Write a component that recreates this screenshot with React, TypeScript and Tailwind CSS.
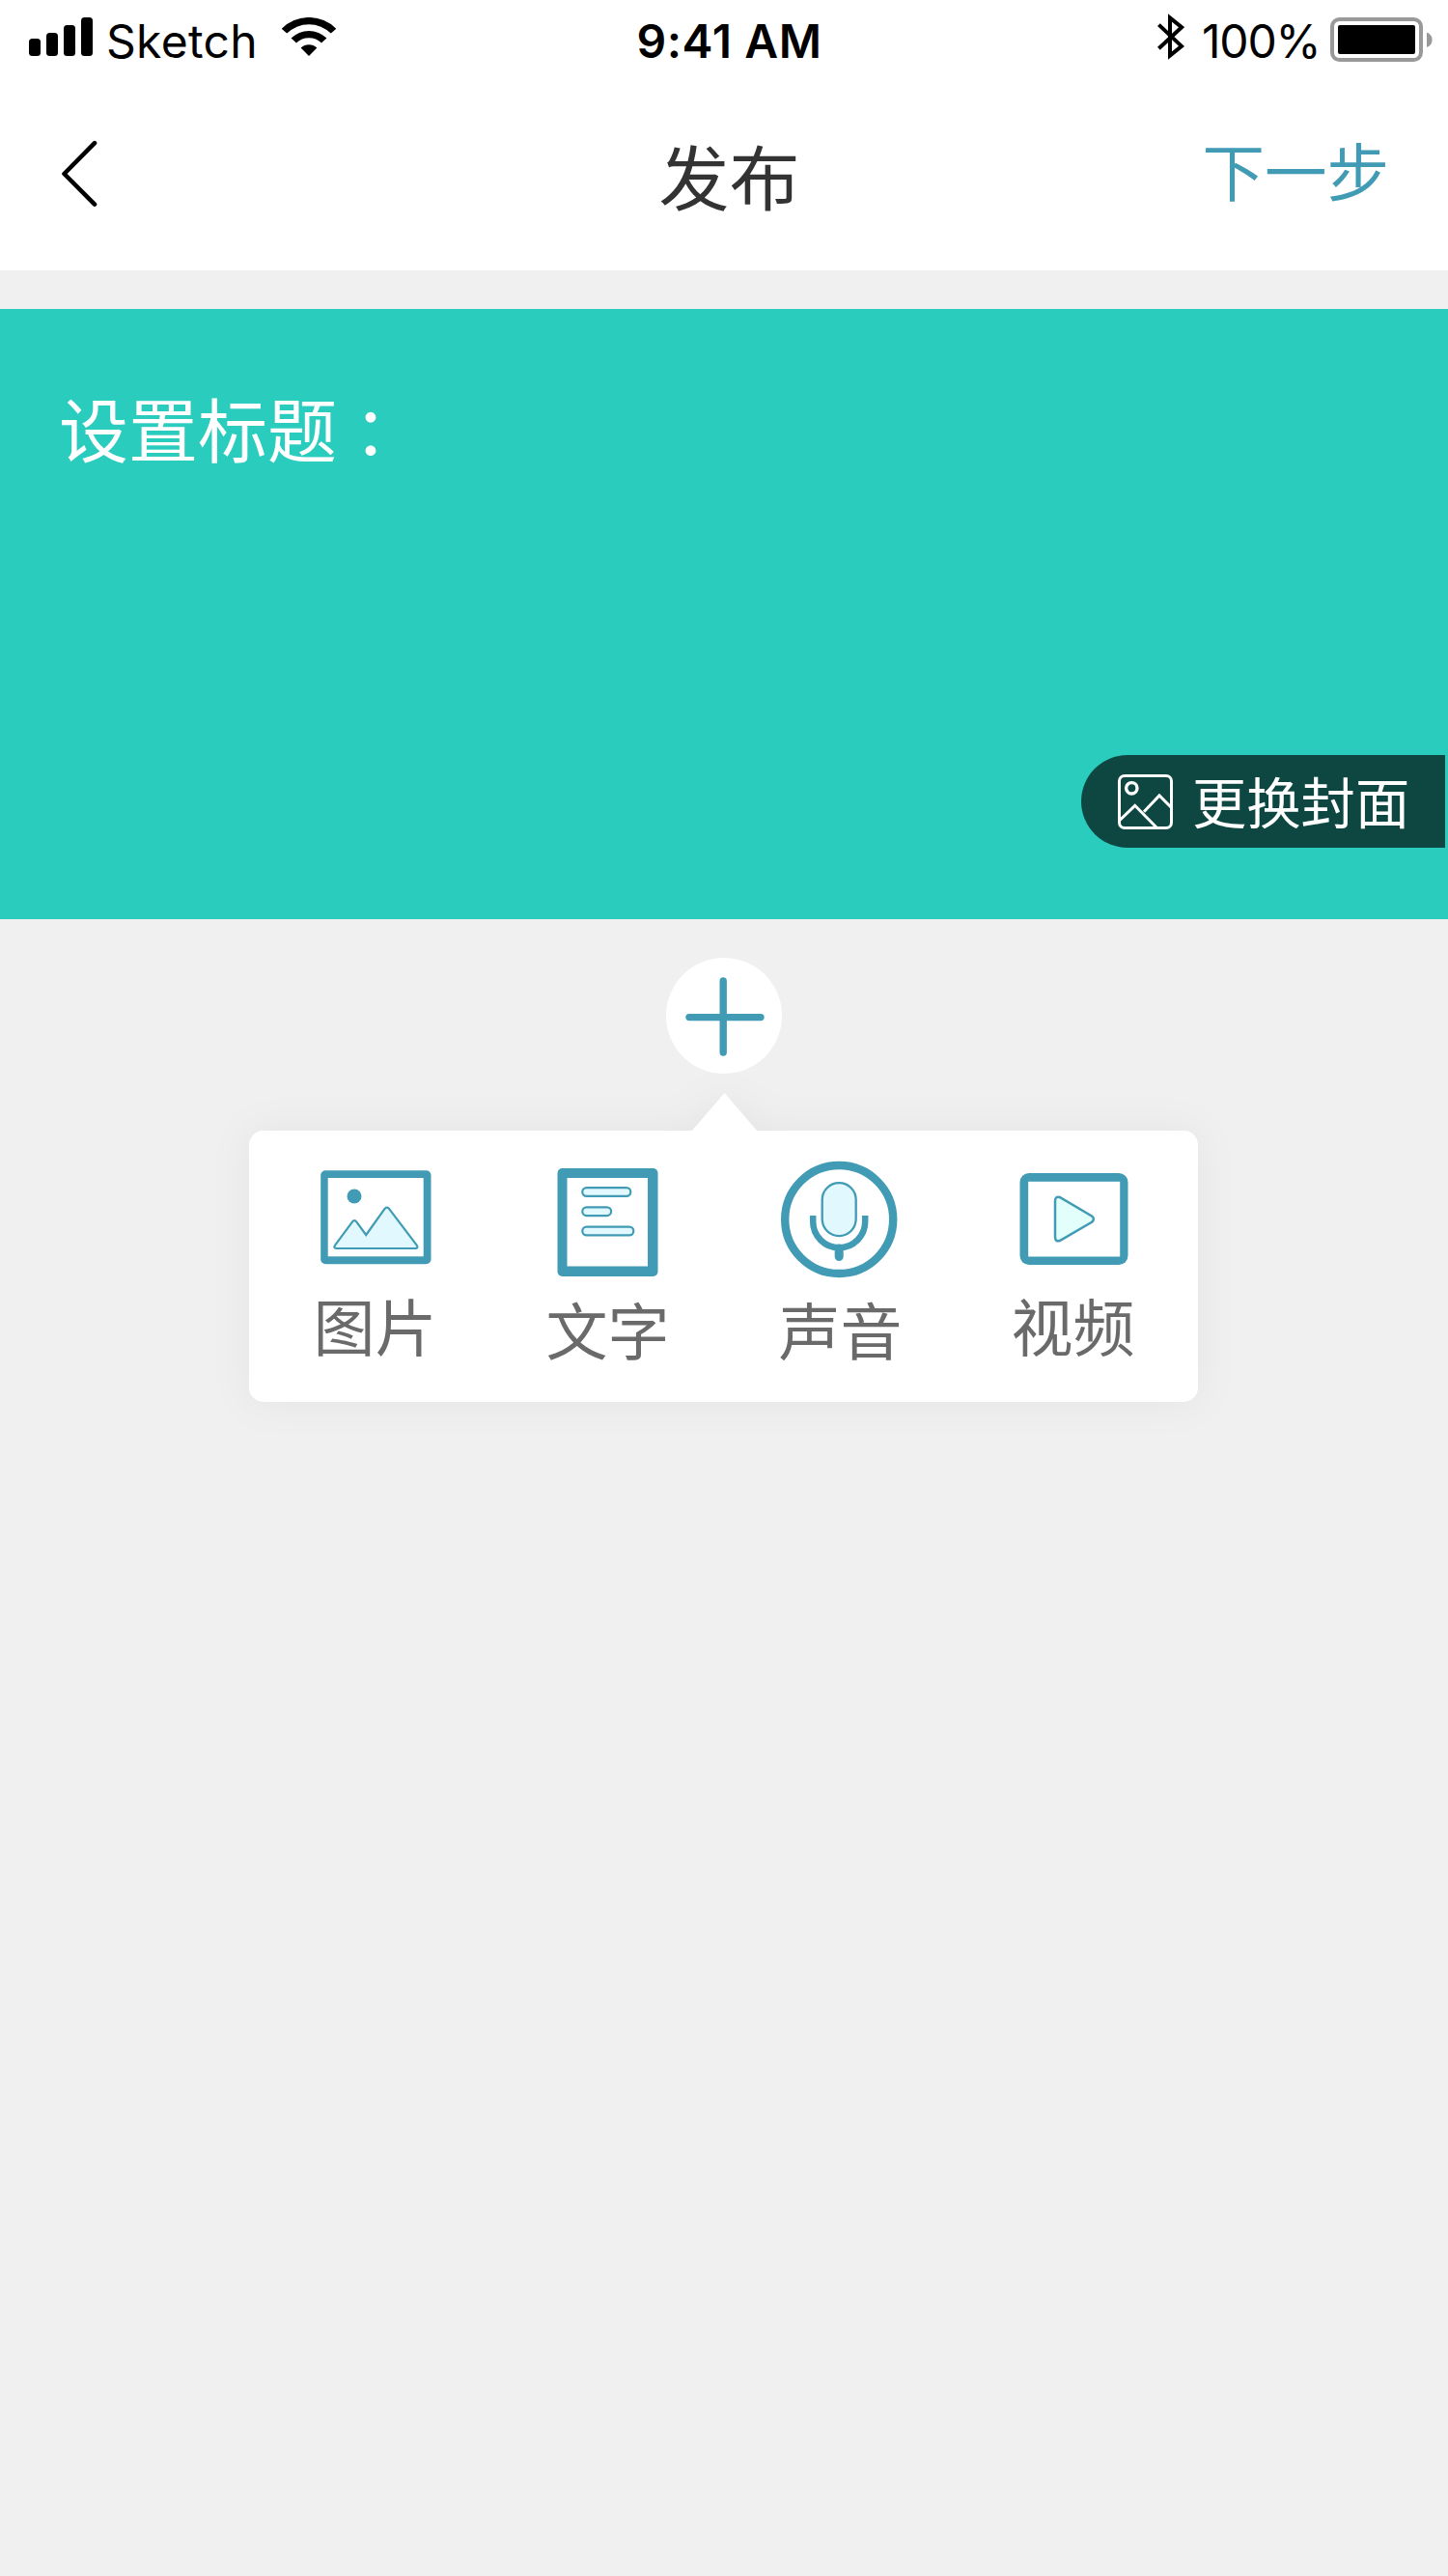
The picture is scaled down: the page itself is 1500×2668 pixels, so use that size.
import type { ReactNode } from "react";

const BLUE = "#419bb4";
const PALE = "#e0f8fe";

function Signal() {
  return (
    <svg className="mt-[18px] block h-10 w-[66px] shrink-0" viewBox="0 0 66 40">
      <rect x="0" y="22" width="12" height="18" rx="3.5" />
      <rect x="18" y="16" width="12" height="24" rx="3.5" />
      <rect x="36" y="8" width="12" height="32" rx="3.5" />
      <rect x="54" y="0" width="12" height="40" rx="3.5" />
    </svg>
  );
}

function Wifi() {
  return (
    <svg className="mt-[18px] block h-10 w-14 shrink-0" viewBox="0 0 56 40">
      <path d="M-.3 11.7A40 40 0 0 1 56.3 11.7L50.8 16.6A32.3 32.3 0 0 0 5.2 16.6Z" />
      <path d="M9.6 21.6A26 26 0 0 1 46.4 21.6L41 26.6A18.2 18.2 0 0 0 15 26.6Z" />
      <path d="M19.6 31.6A12 12 0 0 1 36.4 31.6L28 40Z" />
    </svg>
  );
}

function Bluetooth() {
  return (
    <svg className="mt-[14px] block h-12 w-7 shrink-0" viewBox="0 0 28 48" fill="none" stroke="#000" strokeWidth="4">
      <path d="M1.4 11.6L25 33.8L13 43.6V4.4L25 14.2L1.4 36.2" strokeMiterlimit="10" />
    </svg>
  );
}

function Battery() {
  return (
    <svg className="mt-[18px] block h-[46px] w-[106px] shrink-0" viewBox="0 0 106 46">
      <rect x="2" y="2" width="92" height="42" rx="7.5" fill="none" stroke="#999" strokeWidth="4" />
      <rect x="8" y="8" width="80" height="30" rx="2" />
      <path d="M100 15.5A8.2 8.2 0 0 1 100 31Z" fill="#999" />
    </svg>
  );
}

function CoverIcon() {
  return (
    <svg className="block h-[57px] w-[57px] shrink-0" viewBox="0 0 57 57" fill="none" stroke="#fff" strokeWidth="3">
      <rect x="1.5" y="1.5" width="54" height="54" rx="5.5" />
      <circle cx="14.3" cy="14.3" r="5.7" strokeWidth="3.4" />
      <path d="M2 47.5L17.7 32.3L40 55M27 38.8L43 22L55.5 34.5" />
    </svg>
  );
}

function ActionIcon({ children }: { children: ReactNode }) {
  return (
    <svg className="block h-[120px] w-[120px] overflow-visible" viewBox="0 0 120 120" fill="none">
      {children}
    </svg>
  );
}

const actions = [
  {
    label: "图片",
    offset: "mt-[8px]",
    icon: (
      <>
        <rect x="3.2" y="9.2" width="114.3" height="97" rx="5" fill={BLUE} />
        <rect x="10.7" y="17" width="99" height="81.3" fill="#fff" />
        <circle cx="38" cy="36" r="7.5" fill={BLUE} />
        <path
          d="M19.5 90Q15.8 89.6 18.3 86.3L35.7 62.8Q38.2 59.6 40.6 62.8L50.2 76L69.2 49.3Q71.8 45.8 74.4 49.3L102.5 86.3Q104.8 89.6 101.5 90Z"
          fill={PALE}
          stroke={BLUE}
          strokeWidth="2.2"
        />
      </>
    ),
  },
  {
    label: "文字",
    offset: "mt-[12px]",
    icon: (
      <>
        <rect x="7.5" y="7" width="104" height="112" rx="5" fill={BLUE} />
        <rect x="17.5" y="17" width="83.5" height="91.5" fill="#fff" />
        <g fill={PALE} stroke={BLUE} strokeWidth="2.2">
          <rect x="33.3" y="27.1" width="50" height="8.8" rx="4.4" />
          <rect x="33.3" y="47.3" width="29.8" height="8.8" rx="4.4" />
          <rect x="33.3" y="67.6" width="53" height="8.8" rx="4.4" />
        </g>
      </>
    ),
  },
  {
    label: "声音",
    offset: "mt-[12px]",
    icon: (
      <>
        <circle cx="58.2" cy="60" r="56" stroke={BLUE} strokeWidth="8.4" />
        <rect x="40.7" y="22.1" width="35" height="55" rx="17.5" fill={PALE} stroke={BLUE} strokeWidth="2.3" />
        <path d="M31.2 56V62.3A27 27 0 0 0 85.2 62.3V56" stroke={BLUE} strokeWidth="6.5" />
        <path d="M58.2 90V98.5" stroke={BLUE} strokeWidth="9" strokeLinecap="round" />
      </>
    ),
  },
  {
    label: "视频",
    offset: "mt-[8px]",
    icon: (
      <>
        <rect x="4.5" y="12" width="112" height="95" rx="9.5" fill={BLUE} />
        <rect x="13.2" y="20.8" width="95" height="77.7" fill="#fff" />
        <path
          d="M41 40.5Q41.2 35.7 45.8 37L79 56.5Q82.8 59.5 79 62.8L45.8 82Q41.2 83.5 41 78.5Z"
          fill="#e2fffb"
          stroke={BLUE}
          strokeWidth="2.5"
        />
      </>
    ),
  },
];

export default function App() {
  return (
    <div className="h-[2668px] w-[1500px] overflow-hidden bg-[#f0f0f0] font-['Noto_Sans_CJK_SC',sans-serif]">
      <header className="h-[280px] bg-white">
        <div className="grid h-20 grid-cols-[500px_500px_500px] font-['Inter',sans-serif] text-[48px] leading-[48px] text-black">
          <div className="flex items-start pl-[30px]">
            <Signal />
            <span className="mt-[19px] ml-[14px] w-[156px] tracking-[0.3px] whitespace-nowrap">Sketch</span>
            <span className="ml-[26px]">
              <Wifi />
            </span>
          </div>
          <div className="mt-[19px] pl-[11px] text-center font-semibold tracking-[0.6px] whitespace-nowrap">9:41 AM</div>
          <div className="flex items-start justify-end pr-4">
            <Bluetooth />
            <span className="mt-[19px] mr-[12px] ml-[18px] w-[121px] tracking-[-1.2px] whitespace-nowrap">100%</span>
            <Battery />
          </div>
        </div>
        <nav className="grid h-[200px] grid-cols-[500px_500px_500px]">
          <button className="flex items-start pt-[65px] pl-[63px]" aria-label="返回">
            <svg className="block h-[70px] w-10" viewBox="0 0 40 70" fill="none" stroke="#000" strokeWidth="4.6" strokeLinecap="round" strokeLinejoin="round">
              <path d="M35 3.2L3.5 35L35 66.7" />
            </svg>
          </button>
          <h1 className="pt-16 pl-[11px] text-center text-[73px] leading-[72px] text-[#333]">发布</h1>
          <button className="flex items-start justify-end pt-[63px] pr-[61px] text-[64.5px] leading-[64px] text-[#419bb4]">下一步</button>
        </nav>
      </header>

      <section className="mt-10 flex h-[632px] flex-col justify-between bg-[#2accbe] pb-[74px] text-white">
        <h2 className="flex pt-[82px] pl-[61px] text-[72px] leading-[80px]">
          <span>设置标题</span>
          <span className="pt-[4px] font-['Noto_Sans_CJK_TC',sans-serif] text-[70px]" lang="zh-Hant">
            ：
          </span>
        </h2>
        <button className="mr-[3px] flex h-24 w-[377px] items-center self-end rounded-l-full bg-black/65 pl-[38px]">
          <CoverIcon />
          <span className="-mt-[2px] ml-[20px] text-[56.3px] leading-[56px] whitespace-nowrap">更换封面</span>
        </button>
      </section>

      <button className="mt-10 ml-[690px] block h-[120px] w-[120px] rounded-full bg-white" aria-label="添加">
        <svg className="block h-[120px] w-[120px]" viewBox="0 0 120 120" stroke={BLUE} strokeWidth="7.4" strokeLinecap="round">
          <path d="M59.2 24V98M24 61.6H98" />
        </svg>
      </button>

      <section className="mt-5 ml-[258px] w-[983px] drop-shadow-[0_0_20px_rgba(0,0,0,0.05)]">
        <svg className="mr-auto ml-[459px] block h-[39px] w-[67px]" viewBox="0 0 67 39">
          <path d="M0 39L33.5 0L67 39Z" fill="#fff" />
        </svg>
        <div className="flex h-[281px] rounded-[15px] bg-white pt-8 pl-[10px]">
          {actions.map((a) => (
            <div key={a.label} className="flex w-[241px] shrink-0 flex-col items-center">
              <ActionIcon>{a.icon}</ActionIcon>
              <span className={`${a.offset} text-[64px] leading-[80px] whitespace-nowrap text-[#6a6a6a]`}>{a.label}</span>
            </div>
          ))}
        </div>
      </section>
    </div>
  );
}
